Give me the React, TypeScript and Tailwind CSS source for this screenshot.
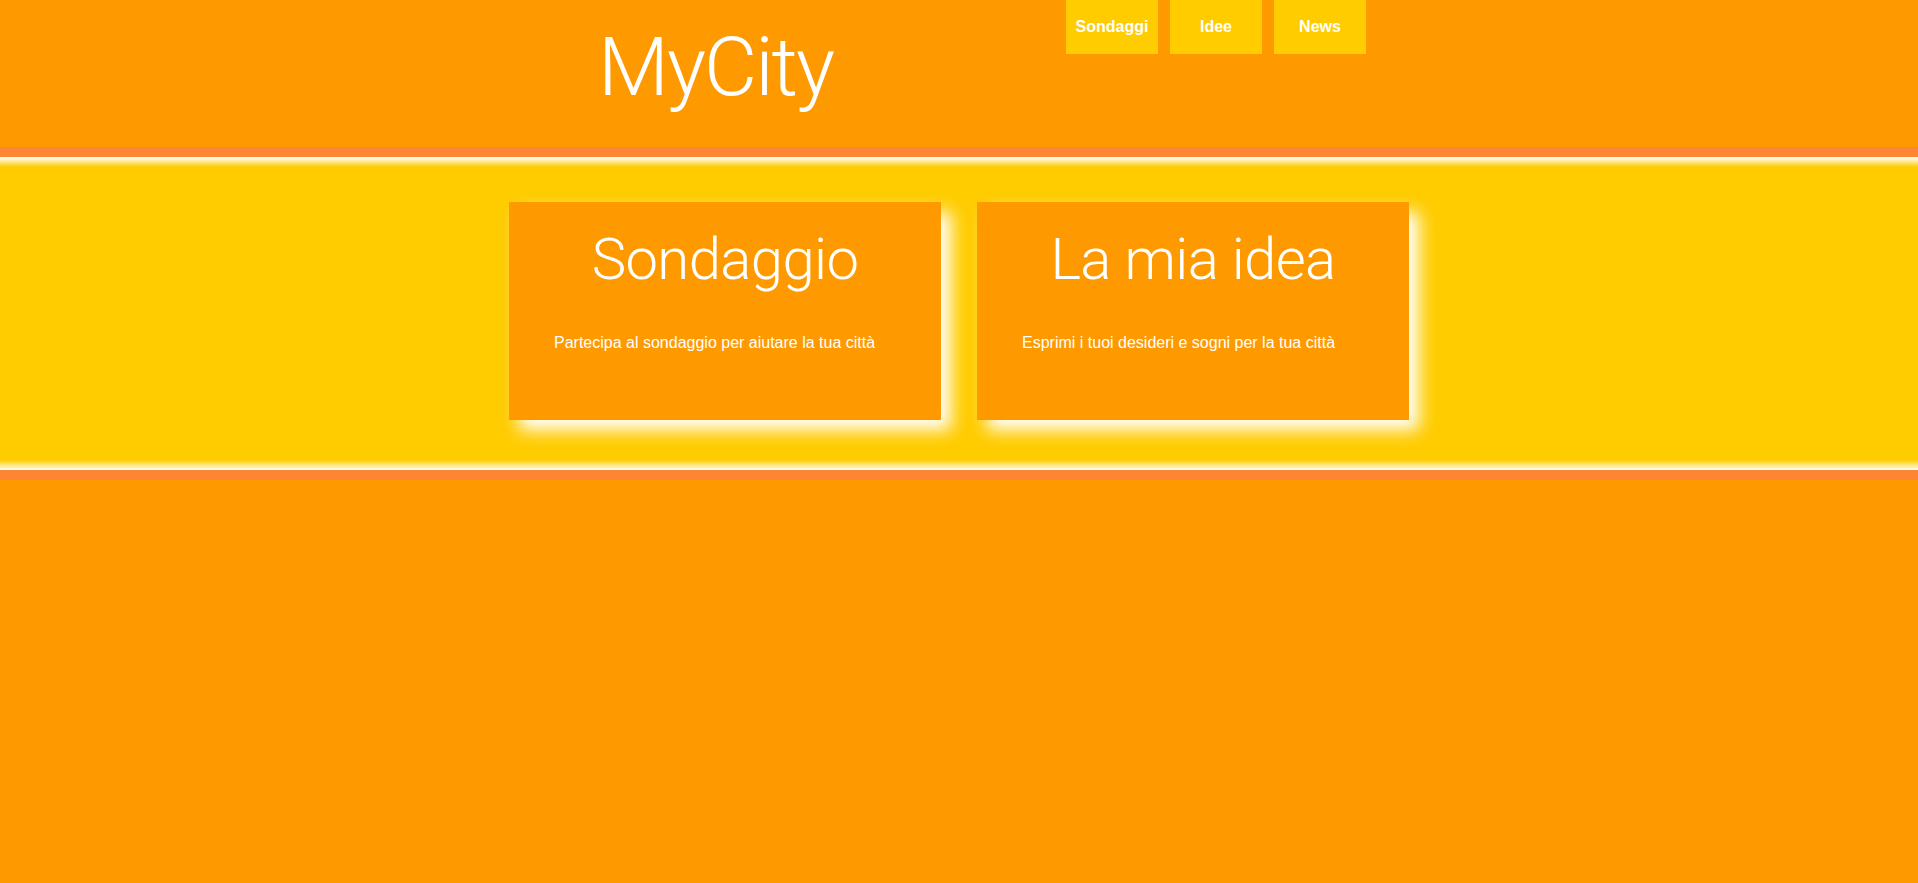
const cards = [
  { title: "Sondaggio", text: "Partecipa al sondaggio per aiutare la tua città" },
  { title: "La mia idea", text: "Esprimi i tuoi desideri e sogni per la tua città" },
];

const navItems = ["Sondaggi", "Idee", "News"];

export default function App() {
  return (
    <div className="min-h-screen bg-[#ff9900] font-['Liberation_Sans',Arial,sans-serif] text-white">
      <header className="grid h-[147px] grid-cols-[1066px_1fr]">
        <div className="pl-[598px] pt-[26px]">
          <h1 className="font-['Roboto',sans-serif] text-[82px] leading-none font-light tracking-[-2px]">
            MyCity
          </h1>
        </div>
        <nav className="flex items-start gap-[12px]">
          {navItems.map((item) => (
            <a
              key={item}
              href="#"
              className="flex h-[54px] w-[92px] items-center justify-center bg-[#ffcc00] text-[16px] font-bold"
            >
              {item}
            </a>
          ))}
        </nav>
      </header>

      {/* yellow band, white glow along top and bottom edges */}
      <section className="border-y-[10px] border-[#fc8536] bg-[linear-gradient(to_bottom,#fff_0px,#fff6cf_2px,#ffcc00_10px,#ffcc00_calc(100%-10px),#fff6cf_calc(100%-2px),#fff_100%)] pt-[45px] pb-[50px]">
        <div className="flex justify-center gap-[36px]">
          {cards.map((card) => (
            <div
              key={card.title}
              className="h-[218px] w-[432px] bg-[#ff9900] pt-[28px] shadow-[10px_10px_16px_#fff]"
            >
              <h2 className="text-center font-['Roboto',sans-serif] text-[58px] leading-none font-light tracking-[-0.6px]">
                {card.title}
              </h2>
              <p className="mt-[43px] px-[45px] text-[16px]">{card.text}</p>
            </div>
          ))}
        </div>
      </section>
    </div>
  );
}
